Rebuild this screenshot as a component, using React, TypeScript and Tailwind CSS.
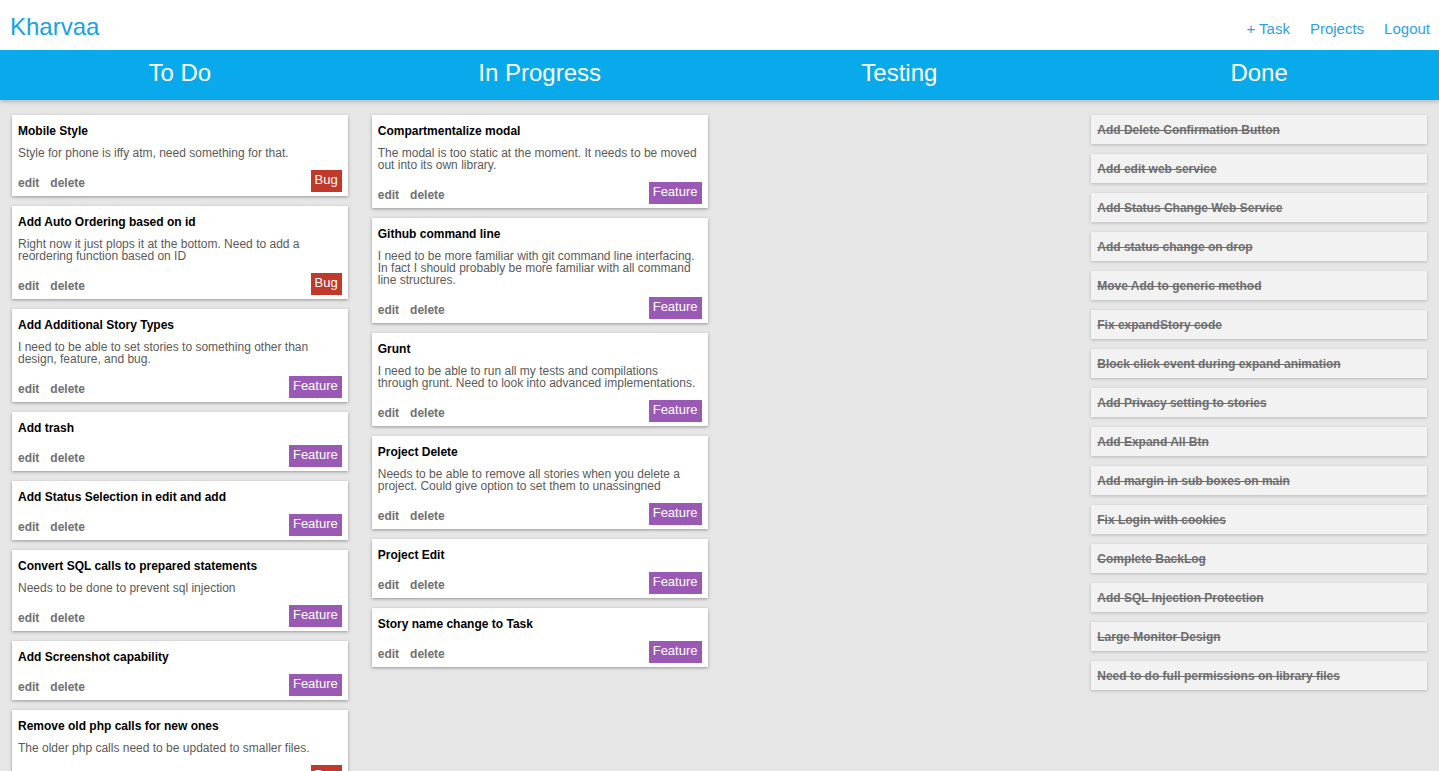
type Story = {
  title: string;
  desc?: string;
  type: "Bug" | "Feature";
};

const todo: Story[] = [
  { title: "Mobile Style", desc: "Style for phone is iffy atm, need something for that.", type: "Bug" },
  {
    title: "Add Auto Ordering based on id",
    desc: "Right now it just plops it at the bottom. Need to add a reordering function based on ID",
    type: "Bug",
  },
  {
    title: "Add Additional Story Types",
    desc: "I need to be able to set stories to something other than design, feature, and bug.",
    type: "Feature",
  },
  { title: "Add trash", type: "Feature" },
  { title: "Add Status Selection in edit and add", type: "Feature" },
  {
    title: "Convert SQL calls to prepared statements",
    desc: "Needs to be done to prevent sql injection",
    type: "Feature",
  },
  { title: "Add Screenshot capability", type: "Feature" },
  {
    title: "Remove old php calls for new ones",
    desc: "The older php calls need to be updated to smaller files.",
    type: "Bug",
  },
];

const inProgress: Story[] = [
  {
    title: "Compartmentalize modal",
    desc: "The modal is too static at the moment. It needs to be moved out into its own library.",
    type: "Feature",
  },
  {
    title: "Github command line",
    desc: "I need to be more familiar with git command line interfacing. In fact I should probably be more familiar with all command line structures.",
    type: "Feature",
  },
  {
    title: "Grunt",
    desc: "I need to be able to run all my tests and compilations through grunt. Need to look into advanced implementations.",
    type: "Feature",
  },
  {
    title: "Project Delete",
    desc: "Needs to be able to remove all stories when you delete a project. Could give option to set them to unassingned",
    type: "Feature",
  },
  { title: "Project Edit", type: "Feature" },
  { title: "Story name change to Task", type: "Feature" },
];

const done = [
  "Add Delete Confirmation Button",
  "Add edit web service",
  "Add Status Change Web Service",
  "Add status change on drop",
  "Move Add to generic method",
  "Fix expandStory code",
  "Block click event during expand animation",
  "Add Privacy setting to stories",
  "Add Expand All Btn",
  "Add margin in sub boxes on main",
  "Fix Login with cookies",
  "Complete BackLog",
  "Add SQL Injection Protection",
  "Large Monitor Design",
  "Need to do full permissions on library files",
];

function StoryCard({ story }: { story: Story }) {
  return (
    <div className="mx-3 mb-[10px] bg-white px-[6px] pt-[9px] pb-[4px] shadow-[0_1px_3px_rgba(0,0,0,0.35)]">
      <div className="text-[12px] leading-[14px] font-bold text-black">{story.title}</div>
      {story.desc && (
        <div className="mt-[9px] pr-[4px] pb-[1px] text-[12px] leading-[12px] text-[#5a5a5a]">
          {story.desc}
        </div>
      )}
      <div className="mt-[10px] flex items-end justify-between">
        <div className="flex gap-[11px] pb-[1px] text-[12px] leading-[16px] font-bold text-[#707070]">
          <span>edit</span>
          <span>delete</span>
        </div>
        <span
          className={
            story.type === "Bug"
              ? "h-[22px] bg-[#c0392b] px-[4px] text-[13px] leading-[20px] text-white"
              : "h-[22px] bg-[#9b59b6] px-[4px] text-[13px] leading-[20px] text-white"
          }
        >
          {story.type}
        </span>
      </div>
    </div>
  );
}

export default function App() {
  return (
    <div className="min-h-screen bg-[#e6e6e6] font-['Liberation_Sans',Arial,sans-serif]">
      <div className="flex h-[50px] items-center justify-between bg-white pr-[9px] pl-[10px]">
        <div className="pt-[4px] text-[24px] text-[#17a2e6]">Kharvaa</div>
        <div className="flex gap-[20px] pt-[9px] text-[15px] text-[#2c9fe6]">
          <span>+ Task</span>
          <span>Projects</span>
          <span>Logout</span>
        </div>
      </div>
      <div className="relative grid h-[50px] grid-cols-4 bg-[#08aaeb] shadow-[0_2px_4px_rgba(0,0,0,0.2)]">
        {["To Do", "In Progress", "Testing", "Done"].map((t) => (
          <div key={t} className="flex items-center justify-center pb-[4px] text-[24px] text-white">
            {t}
          </div>
        ))}
      </div>
      <div className="grid grid-cols-4 items-start pt-[15px]">
        <div>
          {todo.map((s) => (
            <StoryCard key={s.title} story={s} />
          ))}
        </div>
        <div>
          {inProgress.map((s) => (
            <StoryCard key={s.title} story={s} />
          ))}
        </div>
        <div></div>
        <div>
          {done.map((d) => (
            <div
              key={d}
              className="mx-3 mb-[10px] flex h-[29px] items-center bg-[#f2f2f2] px-[6px] pt-[1px] text-[12px] font-bold text-[#6e6e6e] line-through shadow-[0_1px_3px_rgba(0,0,0,0.2)]"
            >
              {d}
            </div>
          ))}
        </div>
      </div>
    </div>
  );
}
